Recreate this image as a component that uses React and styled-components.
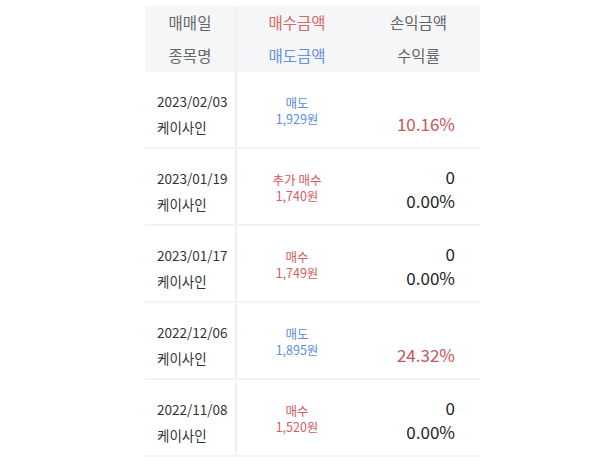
import React from 'react';
import styled, { createGlobalStyle } from 'styled-components';

const GlobalStyle = createGlobalStyle`
  body {
    margin: 0;
    background: #fff;
    font-family: "Noto Sans CJK KR", "Noto Sans", sans-serif;
  }
`;

const Table = styled.div`
  width: 335px;
  margin: 6px 0 0 145px;
`;

const Row = styled.div`
  display: grid;
  grid-template-columns: 92px 120px 1fr;
  background: ${(p) => (p.head ? '#f5f6f8' : '#fff')};
  height: ${(p) => (p.head ? '66px' : '77px')};
  border-bottom: ${(p) => (p.head ? 'none' : '2px solid #f3f3f3')};
  box-sizing: border-box;
`;

const Cell = styled.div`
  display: flex;
  flex-direction: column;
  justify-content: center;
  align-items: ${(p) => p.align || 'center'};
  border-right: ${(p) => (p.divider ? '2px solid #f0f0f0' : 'none')};
  padding: ${(p) => p.pad || '0'};
`;

const HeadText = styled.div`
  font-size: 15.5px;
  line-height: 33px;
  color: ${(p) => p.color || '#666'};
`;

const LeftText = styled.div`
  font-size: 13.5px;
  line-height: 26px;
  color: #333;
  padding-left: 12px;
`;

const TradeText = styled.div`
  font-size: 12.5px;
  line-height: 16px;
  color: ${(p) => (p.sell ? '#5b8ee0' : '#d45c5f')};
`;

const ProfitText = styled.div`
  font-size: 17px;
  line-height: 24px;
  height: 24px;
  color: ${(p) => (p.red ? '#cc5356' : '#222')};
`;

const rows = [
  { date: '2023/02/03', type: '매도', price: '1,929원', amount: '', rate: '10.16%' },
  { date: '2023/01/19', type: '추가 매수', price: '1,740원', amount: '0', rate: '0.00%' },
  { date: '2023/01/17', type: '매수', price: '1,749원', amount: '0', rate: '0.00%' },
  { date: '2022/12/06', type: '매도', price: '1,895원', amount: '', rate: '24.32%' },
  { date: '2022/11/08', type: '매수', price: '1,520원', amount: '0', rate: '0.00%' },
];

export default function App() {
  return (
    <>
      <GlobalStyle />
      <Table>
        <Row head>
          <Cell divider>
            <HeadText>매매일</HeadText>
            <HeadText>종목명</HeadText>
          </Cell>
          <Cell>
            <HeadText color="#d6676a">매수금액</HeadText>
            <HeadText color="#6592dc">매도금액</HeadText>
          </Cell>
          <Cell>
            <HeadText>손익금액</HeadText>
            <HeadText>수익률</HeadText>
          </Cell>
        </Row>
        {rows.map((r) => {
          const sell = r.type === '매도';
          return (
            <Row key={r.date}>
              <Cell divider align="flex-start" pad="8px 0 0">
                <LeftText>{r.date}</LeftText>
                <LeftText>케이사인</LeftText>
              </Cell>
              <Cell pad="3px 0 0">
                <TradeText sell={sell}>{r.type}</TradeText>
                <TradeText sell={sell}>{r.price}</TradeText>
              </Cell>
              <Cell align="flex-end" pad="4px 25px 0 0">
                <ProfitText>{r.amount}</ProfitText>
                <ProfitText red={sell}>{r.rate}</ProfitText>
              </Cell>
            </Row>
          );
        })}
      </Table>
    </>
  );
}
